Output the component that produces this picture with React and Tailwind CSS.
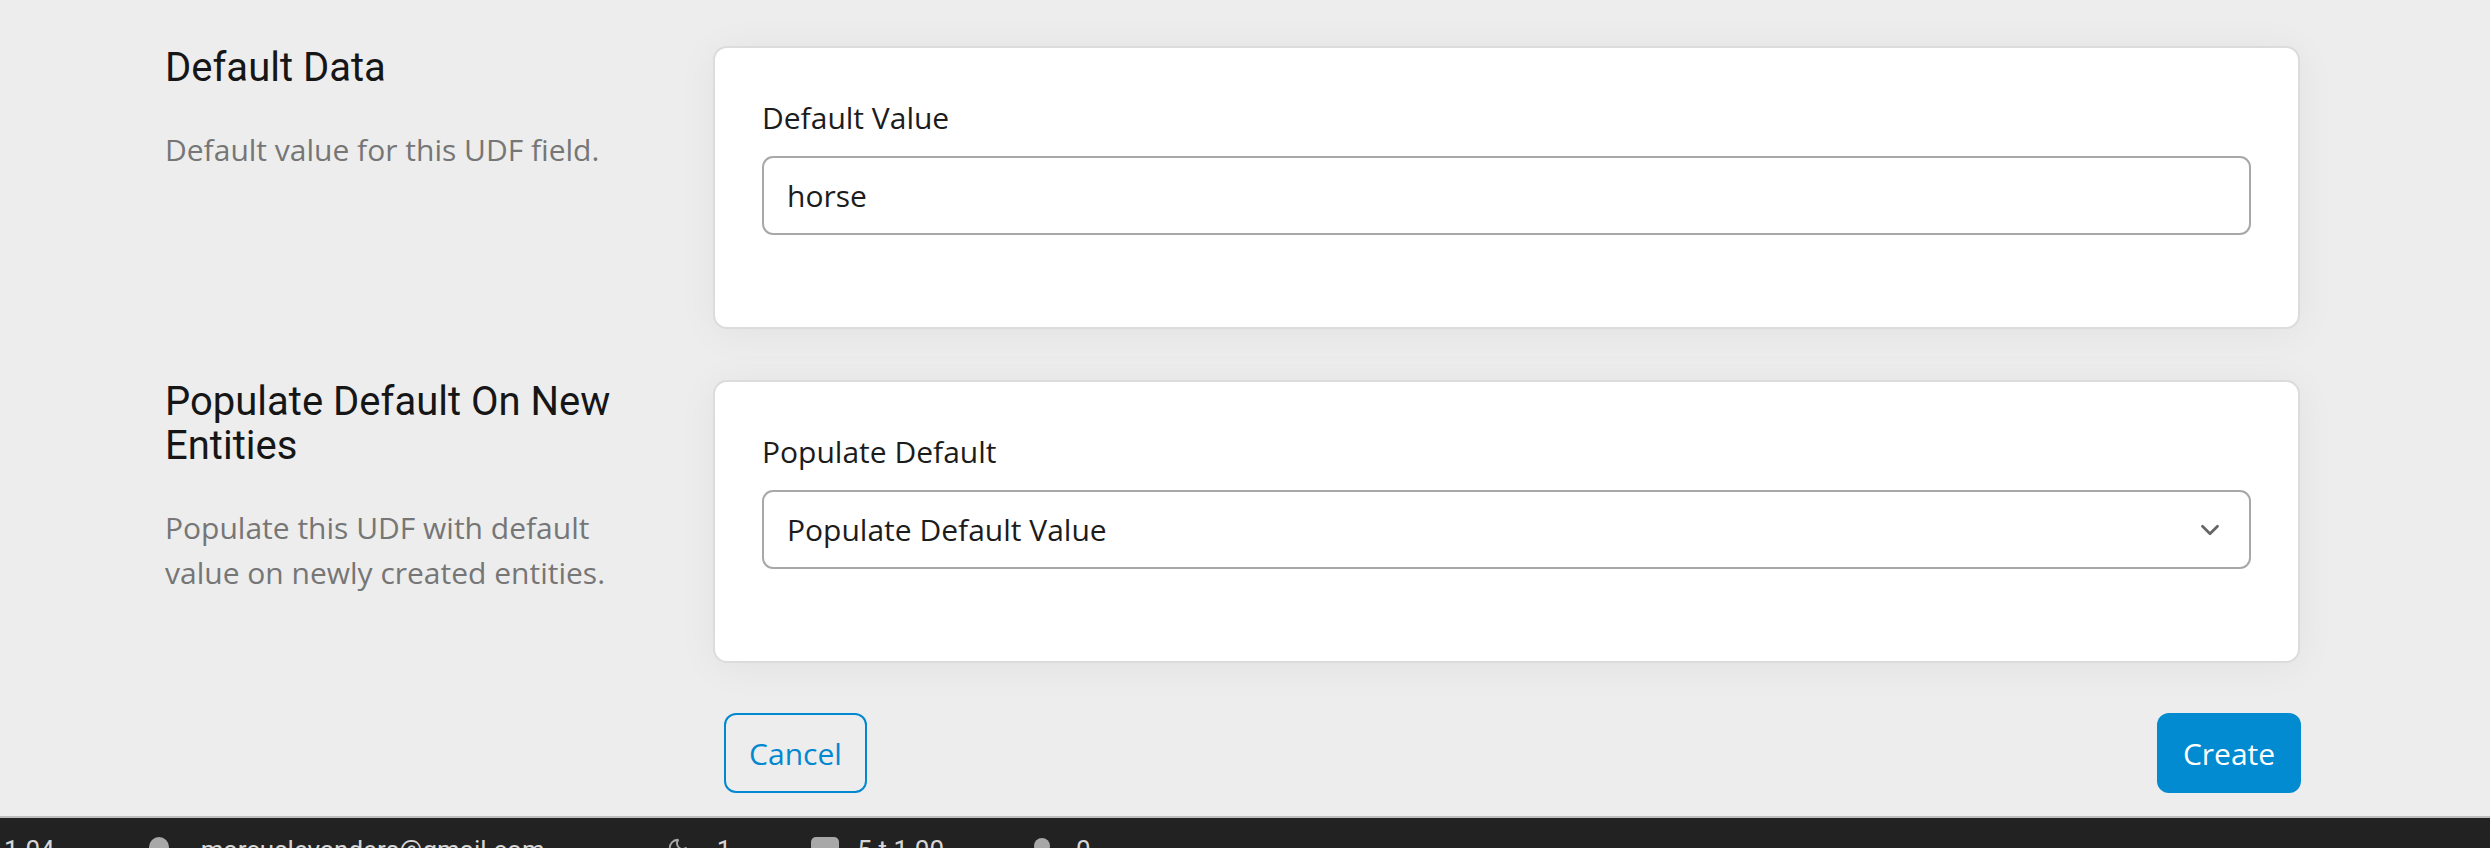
import { ChevronDown, Moon } from 'lucide-react';

const Section = ({ title, description, label, children }) => (
  <>
    <div>
      <h2 className="font-['Roboto',sans-serif] text-[40px] leading-[44px] text-[#161616]">{title}</h2>
      <p className="mt-[37px] text-[30px] leading-[45px] text-[#767676]">{description}</p>
    </div>
    <div className="bg-white border-2 border-[#dcdcdc] rounded-[14px] shadow-[0_4px_40px_rgba(0,0,0,0.05)] px-[47px] pt-[47px] pb-[92px]">
      <label className="block text-[30px] leading-[45px] text-[#1c1c1c]">{label}</label>
      <div className="mt-[16px]">{children}</div>
    </div>
  </>
);

const StatusBar = () => (
  <div className="h-[60px] bg-[#222222] border-t-2 border-[#bdbdbd] flex items-start pt-[17px] font-['Roboto',sans-serif] text-[26px] leading-[30px] text-[#d6d6d6] whitespace-nowrap">
    <span className="ml-[4px]">1.04</span>
    <span className="ml-[94px] mt-[2px] w-[20px] h-[20px] rounded-full bg-[#a8a8a8]" />
    <span className="ml-[32px]">marcuslevanders@gmail.com</span>
    <Moon size={22} className="ml-[122px] mt-[2px] text-[#a8a8a8]" />
    <span className="ml-[28px]">1</span>
    <span className="ml-[80px] mt-[2px] w-[28px] h-[22px] rounded-[5px] bg-[#a8a8a8]" />
    <span className="ml-[18px]">5 t 1.00</span>
    <span className="ml-[90px] mt-[3px] w-[16px] h-[16px] rounded-full bg-[#a8a8a8]" />
    <span className="ml-[26px]">0</span>
  </div>
);

const App = () => {
  return (
    <div className="h-[848px] overflow-hidden bg-[#ededed] font-['Open_Sans',sans-serif]">
      <div className="pt-[46px] pb-[23px]">
        <div className="grid grid-cols-[500px_1587px] gap-x-[48px] gap-y-[51px] ml-[165px]">
          <Section
            title="Default Data"
            description="Default value for this UDF field."
            label="Default Value"
          >
            <input
              type="text"
              defaultValue="horse"
              className="w-full h-[79px] border-2 border-[#a8a8a8] rounded-[11px] px-[23px] text-[30px] text-[#1c1c1c] outline-none bg-white"
            />
          </Section>
          <Section
            title="Populate Default On New Entities"
            description="Populate this UDF with default value on newly created entities."
            label="Populate Default"
          >
            <div className="w-full h-[79px] border-2 border-[#a8a8a8] rounded-[11px] pl-[23px] pr-[24px] flex items-center justify-between text-[30px] text-[#1c1c1c] bg-white">
              <span>Populate Default Value</span>
              <ChevronDown size={30} strokeWidth={2.2} className="text-[#666666]" />
            </div>
          </Section>
        </div>
        <div className="mt-[50px] ml-[713px] w-[1588px] flex justify-between">
          <button className="ml-[11px] w-[143px] h-[80px] border-2 border-[#0288d1] rounded-[12px] text-[30px] text-[#0288d1] bg-transparent">
            Cancel
          </button>
          <button className="w-[144px] h-[80px] rounded-[12px] text-[30px] text-white bg-[#028bd0]">
            Create
          </button>
        </div>
      </div>
      <StatusBar />
    </div>
  );
};

export default App;
